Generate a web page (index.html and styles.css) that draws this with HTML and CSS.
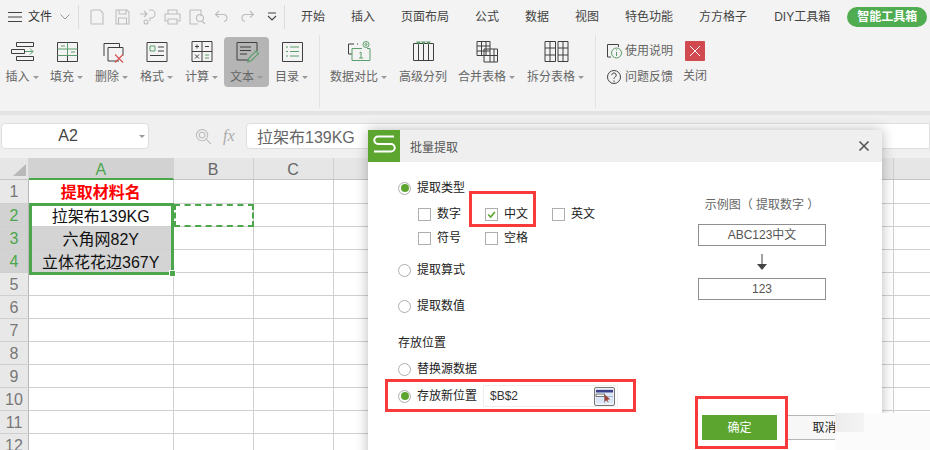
FILE: index.html
```html
<!DOCTYPE html>
<html lang="zh-CN">
<head>
<meta charset="utf-8">
<title>批量提取</title>
<link rel="stylesheet" href="styles.css">
</head>
<body>
<div class="app">
  <header class="topbar">
    <div class="menu-btn">
      <svg class="hamb" viewBox="0 0 14 10"><path d="M0 .5h14M0 5h14M0 9.500h14"/></svg>
      <span class="file-label">文件</span>
      <svg class="chev" viewBox="0 0 10 6"><path d="M.5.500 5 5l4.500-4.500"/></svg>
    </div>
    <i class="vsep"></i>
    <div class="qat">
      <svg viewBox="0 0 18 18"><path d="M4 2h8l3 3v11H4a1 1 0 0 1-1-1V3a1 1 0 0 1 1-1z"/></svg>
      <svg viewBox="0 0 18 18"><path d="M3 2h11l2 2v12H3zM6 2v4h7V2M5.500 16v-6h8v6"/></svg>
      <svg viewBox="0 0 18 18"><path d="M2 6h7M6 3l3 3-3 3M11 2h2a3 3 0 0 1 0 8h-1v3M6 14a2 2 0 1 0 4 0 2 2 0 1 0-4 0"/></svg>
      <svg viewBox="0 0 18 18"><path d="M5 6V2h9v4M2 6h15v7h-3M5 13H2V6M5 11h9v5H5z"/></svg>
      <svg viewBox="0 0 18 18"><path d="M2 2h11v6M2 2v14h8M4 5h0M8.500 10a3.500 3.500 0 1 0 7 0 3.500 3.500 0 1 0-7 0M14 13l3 3"/></svg>
      <svg viewBox="0 0 18 18"><path d="M6 3 2.500 6.500 6 9.500M3 6.500h7a3.500 3.500 0 0 1 1 7"/></svg>
      <svg viewBox="0 0 18 18"><path d="m12 3 3.500 3.500L12 9.500M15 6.500H8a3.500 3.500 0 0 0-1 7"/></svg>
      <svg class="more" viewBox="0 0 18 18"><path d="M5 5h8M5 8l4 4 4-4"/></svg>
    </div>
    <i class="vsep sep2"></i>
    <nav class="tabs">
      <span>开始</span><span>插入</span><span>页面布局</span><span>公式</span><span>数据</span><span>视图</span><span>特色功能</span><span>方方格子</span><span>DIY工具箱</span>
    </nav>
    <span class="pill">智能工具箱</span>
  </header>

  <section class="ribbon">
    <div class="group g1">
      <div class="tool first">
        <svg viewBox="0 0 26 22"><path d="M7.500 1.500h17v4h-17zM2.500 8.500h13v4h-13zM7.500 15.500h17v4h-17z"/><path class="gr" d="M16 10.500h8M21 7.500l3 3-3 3"/></svg>
        <span class="lbl">插入<b class="caret"></b></span>
      </div>
      <div class="tool">
        <svg viewBox="0 0 26 22"><path d="M3.500 1.500h20v19h-20zM3.500 14.500h20M13.500 8v12.500"/><path class="gr" d="M3.500 8h20M13.500 1.500V8M3.500 14.500h20M13.500 8v6.500M7 5h4M17 11h4"/></svg>
        <span class="lbl">填充<b class="caret"></b></span>
      </div>
      <div class="tool">
        <svg viewBox="0 0 26 22"><path d="M5 15V2.500h15.500V6M9 6.500h15v8M20 20H9V6.500"/><path class="rd" d="M16 13.500l8 8M24 13.500l-8 8"/></svg>
        <span class="lbl">删除<b class="caret"></b></span>
      </div>
      <div class="tool">
        <svg viewBox="0 0 26 22"><path d="M3 1.500h20v19H3zM14 6h6M14 10h6M6 14.500h14"/><path class="gr" d="M6 5h5v5H6z"/></svg>
        <span class="lbl">格式<b class="caret"></b></span>
      </div>
      <div class="tool">
        <svg viewBox="0 0 26 22"><path d="M3 .5h20v20H3zM13 .5v20M3 10.500h20M6 5.500h4M8 3.500v4M16 5.500h4M6 13.500l4 4M10 13.500l-4 4"/><path class="gr" d="M16 14h4M16 17h4"/></svg>
        <span class="lbl">计算<b class="caret"></b></span>
      </div>
      <div class="tool active">
        <svg viewBox="0 0 26 22"><path d="M14 19H3V1.500h20V10M6 6h11M6 9.500h11M6 13h7"/><path class="gr thick" d="M14 21l1-4 7-7 2.500 2.500-7 7z"/></svg>
        <span class="lbl">文本<b class="caret"></b></span>
      </div>
      <div class="tool">
        <svg viewBox="0 0 26 22"><path d="M3.500 1.500h20a.5.5 0 0 1 0 0v19h-20z"/><path class="gr" d="M7 6h2M11 6h9M7 10.500h2M11 10.500h9M7 15h2M11 15h9"/></svg>
        <span class="lbl">目录<b class="caret"></b></span>
      </div>
    </div>
    <i class="rsep"></i>
    <div class="group g2">
      <div class="tool auto">
        <svg viewBox="0 0 26 22"><path d="M6 13H2.500V3H8M11 3h1"/><path class="gr" d="M6 7.500v12h18v-12h-3M6 7.500h10M13 17h4M15 17v-6l-1.500 1"/><circle class="gr" cx="20" cy="3.500" r="3"/><circle class="gr" cx="20" cy="3.500" r="1"/></svg>
        <span class="lbl">数据对比<b class="caret"></b></span>
      </div>
      <div class="tool auto plain">
        <svg viewBox="0 0 26 22"><path d="M3.500 2.500h20v17h-20zM8.500 2.500v17M13.500 2.500v17M18.500 2.500v17"/><path class="gf" d="M6 .5h5l-2.500 3zM11 .5h5l-2.500 3zM16 .5h5l-2.500 3z"/></svg>
        <span class="lbl">高级分列</span>
      </div>
      <div class="tool auto">
        <svg viewBox="0 0 26 22"><path d="M3 .5h13v14H3zM3 5h13M3 10h13M7.500.5v14M12 .5v14M10 8h13.500v13H10zM10 14.500h13.500M16 14.500V21M20 8v13"/></svg>
        <span class="lbl">合并表格<b class="caret"></b></span>
      </div>
      <div class="tool auto">
        <svg viewBox="0 0 26 22"><path d="M2 .5h10.500v20H2zM15 .5h10v20H15zM2 7h10.500M2 14h10.500M7 .5v20M15 7h10M15 14h10M20 .5v20"/></svg>
        <span class="lbl">拆分表格<b class="caret"></b></span>
      </div>
    </div>
    <i class="rsep"></i>
    <div class="group g3">
      <div class="help">
        <div class="help-row">
          <svg viewBox="0 0 16 16"><path d="M5 14H1.500V1.500h11V4"/><circle class="gr" cx="10.500" cy="10" r="5"/><path class="gr" d="M10.500 9v4M10.500 6.500v1"/></svg>
          <span>使用说明</span>
        </div>
        <div class="help-row">
          <svg viewBox="0 0 16 16"><circle cx="8" cy="8" r="6.500"/><path d="M5.800 6.200a2.200 2.200 0 1 1 3.400 1.800C8.300 8.600 8 9 8 10M8 11.500v1.500"/></svg>
          <span>问题反馈</span>
        </div>
      </div>
      <div class="close-tool">
        <span class="redbox"><svg viewBox="0 0 20 20"><path d="m5 5 10 10M15 5 5 15"/></svg></span>
        <span class="lbl">关闭</span>
      </div>
    </div>
  </section>
  <div class="strip"></div>

  <section class="formula">
    <div class="namebox"><span>A2</span><b class="caret"></b></div>
    <svg class="searchfx" viewBox="0 0 18 18"><circle cx="7.500" cy="7.500" r="6"/><circle cx="7.500" cy="7.500" r="3"/><path d="m12 12 5 5"/></svg>
    <span class="fx">fx</span>
    <div class="finput">拉架布139KG</div>
  </section>

  <section class="sheet">
    <div class="hrow">
      <div class="corner"><svg viewBox="0 0 13 12"><path d="M13 0v12H0z"/></svg></div>
      <div class="ch a sel">A</div>
      <div class="ch b">B</div>
      <div class="ch c">C</div>
      <div class="ch fill"></div>
    </div>
    <div class="row tall"><div class="rh">1</div><div class="cell a title">提取材料名</div><div class="cell b"></div><div class="rest"></div></div>
    <div class="row"><div class="rh sel">2</div><div class="cell a">拉架布139KG</div><div class="cell b"></div><div class="rest"></div></div>
    <div class="row"><div class="rh sel">3</div><div class="cell a gray">六角网82Y</div><div class="cell b"></div><div class="rest"></div></div>
    <div class="row"><div class="rh sel">4</div><div class="cell a gray">立体花花边367Y</div><div class="cell b"></div><div class="rest"></div></div>
    <div class="row"><div class="rh">5</div><div class="cell a"></div><div class="cell b"></div><div class="rest"></div></div>
    <div class="row"><div class="rh">6</div><div class="cell a"></div><div class="cell b"></div><div class="rest"></div></div>
    <div class="row"><div class="rh">7</div><div class="cell a"></div><div class="cell b"></div><div class="rest"></div></div>
    <div class="row"><div class="rh">8</div><div class="cell a"></div><div class="cell b"></div><div class="rest"></div></div>
    <div class="row"><div class="rh">9</div><div class="cell a"></div><div class="cell b"></div><div class="rest"></div></div>
    <div class="row"><div class="rh">10</div><div class="cell a"></div><div class="cell b"></div><div class="rest"></div></div>
    <div class="row"><div class="rh">11</div><div class="cell a"></div><div class="cell b"></div><div class="rest"></div></div>
    <div class="row"><div class="rh">12</div><div class="cell a"></div><div class="cell b"></div><div class="rest"></div></div>
  </section>

  <div class="selection"><i class="handle"></i></div>
  <div class="marching"></div>

  <div class="dialog">
    <div class="dlg-title">
      <span class="logo"><svg viewBox="0 0 32 32"><path d="M26 6.500H10a3.500 3.500 0 0 0 0 7.500h13a3.500 3.500 0 0 1 0 7.500H6"/></svg></span>
      <span class="dlg-name">批量提取</span>
      <svg class="dlg-x" viewBox="0 0 12 12"><path d="m1.500 1.500 9 9M10.500 1.500l-9 9"/></svg>
    </div>
    <div class="dlg-body">
      <div class="left">
        <label class="radio-row r1"><i class="radio on"></i>提取类型</label>
        <div class="checks c1">
          <label><i class="box"></i>数字</label>
          <label><i class="box"><svg viewBox="0 0 13 13"><path d="m2.500 6.500 3 3 5-6"/></svg></i>中文</label>
          <label><i class="box"></i>英文</label>
        </div>
        <div class="checks c2">
          <label><i class="box"></i>符号</label>
          <label><i class="box"></i>空格</label>
        </div>
        <label class="radio-row r2"><i class="radio"></i>提取算式</label>
        <label class="radio-row r3"><i class="radio"></i>提取数值</label>
        <div class="section-label">存放位置</div>
        <label class="radio-row r4"><i class="radio"></i>替换源数据</label>
        <div class="radio-row r5">
          <i class="radio on"></i>存放新位置
          <div class="ref-input">
            <span>$B$2</span>
            <span class="ref-btn"><svg viewBox="0 0 20 16"><path class="t1" d="M1 1h18v3H1z"/><path class="t2" d="M1 4h18v11H1z"/><path class="t3" d="M1 8h18M10 4v11"/><path class="t4" d="M1 5.500h9V8H1z"/><path class="t5" d="m10 6 6 5-3 .5 1.500 3-3-2.500-1.500 2z"/></svg></span>
          </div>
        </div>
      </div>
      <div class="right">
        <div class="caption">示例图（ 提取数字 ）</div>
        <div class="sample">ABC123中文</div>
        <svg class="down" viewBox="0 0 12 16"><path class="ln" d="M6 0v13"/><path class="hd" d="M1 10h10l-5 6z"/></svg>
        <div class="sample">123</div>
      </div>
    </div>
    <div class="actions">
      <button class="btn ok">确定</button>
      <button class="btn cancel">取消</button>
    </div>
  </div>

  <div class="mark m1"></div>
  <div class="mark m2"></div>
  <div class="mark m3"></div>
  <div class="watermark"></div>
</div>
</body>
</html>
```
FILE: styles.css
```css
* { box-sizing: border-box; }
html, body { margin: 0; padding: 0; }
body {
  width: 930px;
  height: 450px;
  overflow: hidden;
  background: #fff;
  font-family: "Liberation Sans", "Noto Sans CJK SC", sans-serif;
  font-size: 12px;
  color: #444;
}
.app { position: relative; width: 930px; height: 450px; overflow: hidden; display: flex; flex-direction: column; }

/* top bar */
.topbar { flex: none; height: 33px; background: #f3f3f3; display: flex; align-items: center; }
.menu-btn { display: flex; align-items: center; padding-left: 8px; width: 78px; flex: none; }
.hamb { width: 14px; height: 10px; fill: none; stroke: #444; stroke-width: 1; }
.file-label { margin-left: 6px; color: #333; line-height: 16px; }
.chev { width: 10px; height: 6px; margin-left: 8px; fill: none; stroke: #999; stroke-width: 1; }
.vsep { flex: none; width: 1px; height: 24px; background: #dcdcdc; }
.qat { flex: none; width: 205px; display: flex; padding-left: 9px; gap: 7px; align-items: center; }
.qat svg { flex: none; width: 18px; height: 18px; fill: none; stroke: #bdbdbd; stroke-width: 1.100; }
.qat .more { stroke: #444; }
.tabs { flex: none; display: flex; gap: 26px; padding-left: 16px; color: #444; line-height: 16px; }
.tabs span:last-child { margin-left: 1px; }
.pill { flex: none; margin-left: 17px; width: 80px; height: 20px; border-radius: 10px; background: #4fac50; color: #fff; font-weight: bold; line-height: 20px; text-align: center; }

/* ribbon */
.ribbon { flex: none; height: 78px; background: #f3f3f3; display: flex; align-items: flex-start; padding-top: 2px; }
.group { display: flex; flex: none; padding-top: 2px; }
.g1 { width: 319px; }
.g2 { width: 275px; padding-left: 10px; }
.g3 { flex: 1; padding-left: 10px; }
.rsep { flex: none; width: 1px; height: 73px; background: #e2e2e2; }
.tool { flex: none; width: 45px; height: 50px; border-radius: 4px; padding-top: 4px; display: flex; flex-direction: column; align-items: center; }
.tool.first { width: 44px; }
.tool.active { background: #b5b5b5; }
.tool svg { flex: none; width: 26px; height: 22px; fill: none; stroke: #3f3f3f; stroke-width: 1; }
.tool svg .gr, .help svg .gr { stroke: #5c9e6c; }
.tool svg .thick { stroke-width: 1.200; }
.tool svg .rd { stroke: #d9535a; stroke-width: 1.200; }
.tool svg .gf { fill: #5c9e6c; stroke: none; }
.tool.auto { width: auto; }
.g2 .tool { margin-right: 12px; }
.g2 .tool.plain { margin-right: 11px; }
.lbl { display: flex; align-items: center; margin-top: 6px; height: 16px; line-height: 16px; color: #666; white-space: nowrap; }
.caret { display: block; margin-left: 3px; width: 0; height: 0; border: 3px solid transparent; border-top: 3px solid #999; border-bottom: 0; }
.help { width: 77px; padding-top: 6px; }
.help-row { display: flex; align-items: center; height: 16px; margin-bottom: 10px; color: #666; line-height: 16px; }
.help-row svg { flex: none; width: 16px; height: 16px; margin-right: 3px; fill: none; stroke: #444; stroke-width: 1; }
.close-tool { display: flex; flex-direction: column; align-items: center; padding-top: 4px; width: 24px; }
.redbox { display: block; width: 20px; height: 20px; background: #d04a4f; border-radius: 1px; }
.redbox svg { display: block; width: 20px; height: 20px; fill: none; stroke: #fff; stroke-width: 1; }
.close-tool .lbl { margin-top: 7px; }
.strip { flex: none; height: 4px; background: #e3e3e3; }

/* formula bar */
.formula { flex: none; height: 43px; background: #f0f0f0; display: flex; align-items: flex-start; padding: 8px 0 0 1px; }
.namebox { flex: none; width: 148px; height: 26px; background: #fff; border: 1px solid #dedede; border-radius: 4px; display: flex; align-items: center; font-size: 16px; color: #444; padding-right: 3px; }
.namebox span { flex: 1; text-align: center; padding-right: 2px; }
.searchfx { flex: none; width: 17px; height: 17px; margin: 5px 0 0 46px; fill: none; stroke: #bbb; stroke-width: 1.100; }
.fx { flex: none; width: 14px; margin: 3px 0 0 11px; font: italic 16px/20px "Liberation Serif", serif; color: #aaa; }
.finput { flex: 1; margin-left: 9px; height: 26px; background: #fff; border: 1px solid #dedede; border-radius: 4px 0 0 4px; padding-left: 10px; font-size: 16px; line-height: 28px; color: #666; }

/* sheet */
.sheet { flex: 1; display: flex; flex-direction: column; background: #fff; }
.hrow { flex: none; height: 22px; display: flex; background: #e6e6e6; border-bottom: 1px solid #c4c4c4; }
.corner { flex: none; width: 29px; padding: 6px 0 0 13px; border-right: 1px solid #d4d4d4; }
.corner svg { display: block; width: 13px; height: 12px; fill: #b9b9b9; }
.ch { flex: none; text-align: center; font-size: 16px; line-height: 24px; color: #666; border-right: 1px solid #d0d0d0; }
.ch.a { width: 144.500px; }
.ch.b { width: 80px; }
.ch.c { width: 80px; }
.ch.fill { flex: 1; border: 0; background: repeating-linear-gradient(90deg, transparent 0, transparent 79px, #d0d0d0 79px, #d0d0d0 80px); }
.ch.sel { background: #d2d2d2; color: #4ca64c; border-bottom: 2px solid #4ca64c; height: 22px; border-right-color: #d2d2d2; }
.row { flex: none; height: 23px; display: flex; }
.row.tall { height: 24px; }
.rh { flex: none; width: 29px; background: #e8e8e8; border-right: 1px solid #b8b8b8; border-bottom: 1px solid #cfcfcf; text-align: center; font-size: 16px; line-height: 24px; color: #777; overflow: hidden; }
.rh.sel { background: #d2d2d2; color: #4ca64c; }
.cell { flex: none; border-right: 1px solid #d0d0d0; border-bottom: 1px solid #d0d0d0; text-align: center; font-size: 16px; line-height: 26px; color: #111; white-space: nowrap; overflow: hidden; }
.cell.a { width: 144.500px; }
.cell.b { width: 80px; }
.cell.gray { background: #d4d4d4; }
.cell.title { color: #f00; font-weight: bold; }
.rest { flex: 1; border-bottom: 1px solid #d0d0d0; background: repeating-linear-gradient(90deg, transparent 0, transparent 79px, #d0d0d0 79px, #d0d0d0 80px); }

.selection { position: absolute; left: 29px; top: 203px; width: 145px; height: 72px; border: 3px solid #4ca64c; }
.handle { position: absolute; right: -5px; bottom: -5px; width: 6px; height: 6px; background: #4ca64c; border: 1px solid #fff; box-sizing: content-box; width: 5px; height: 5px; }
.marching { position: absolute; left: 174px; top: 204px; width: 80px; height: 23px; border: 2px dashed #4ca64c; }

/* dialog */
.dialog { position: absolute; left: 368px; top: 130px; width: 514px; height: 330px; background: #fff; box-shadow: 0 0 12px rgba(0,0,0,.28); }
.dlg-title { height: 32px; background: #efefef; display: flex; align-items: center; }
.logo { flex: none; width: 32px; height: 32px; background: #5ca52f; }
.logo svg { display: block; width: 32px; height: 32px; fill: none; stroke: #fff; stroke-width: 2; }
.dlg-name { margin-left: 10px; padding-top: 4px; color: #555; flex: 1; line-height: 16px; }
.dlg-x { flex: none; width: 12px; height: 12px; margin-right: 12px; fill: none; stroke: #555; stroke-width: 1.600; }
.dlg-body { display: flex; height: 244px; }
.left { flex: none; width: 330px; padding: 16px 0 0 30px; }
.radio-row { display: flex; align-items: center; height: 20px; color: #222; line-height: 16px; white-space: nowrap; }
.radio { flex: none; width: 13px; height: 13px; margin-right: 6px; border: 1px solid #aeaeae; border-radius: 50%; background: #fff; display: flex; align-items: center; justify-content: center; }
.radio.on::after { content: ""; width: 8px; height: 8px; border-radius: 50%; background: #5ca52f; }
.checks { display: flex; height: 20px; padding-left: 20px; }
.c1 { margin-top: 6px; }
.c2 { margin-top: 4px; }
.checks label { flex: none; width: 67px; display: flex; align-items: center; color: #222; line-height: 16px; }
.box { flex: none; width: 13px; height: 13px; margin-right: 6px; border: 1px solid #aeaeae; background: #fff; display: block; }
.box svg { display: block; width: 11px; height: 11px; fill: none; stroke: #5ca52f; stroke-width: 2; }
.r2 { margin-top: 12px; }
.r3 { margin-top: 16px; }
.section-label { margin-top: 17px; height: 20px; line-height: 20px; color: #222; }
.r4 { margin-top: 6px; }
.r5 { margin-top: 7px; }
.ref-input { flex: none; width: 135px; height: 22px; margin-left: 6px; border: 1px solid #efefef; display: flex; align-items: center; justify-content: space-between; padding: 0 2px 0 6px; color: #333; }
.ref-btn { display: block; width: 21px; height: 19px; border: 1px solid #777; border-radius: 2px; background: #eef2f8; }
.ref-btn svg { display: block; width: 19px; height: 17px; }
.t1 { fill: #3b3f8c; }
.t2 { fill: #dbe7f6; }
.t3 { fill: none; stroke: #9fb4d2; stroke-width: 1; }
.t4 { fill: #fff; stroke: #555; stroke-width: .8; }
.t5 { fill: #a04030; }
.right { flex: none; width: 128px; padding-top: 33px; display: flex; flex-direction: column; align-items: center; }
.caption { height: 20px; line-height: 20px; color: #666; white-space: nowrap; }
.sample { width: 128px; height: 22px; margin-top: 9px; border: 1px solid #8f8f8f; text-align: center; line-height: 21px; color: #555; }
.down { flex: none; width: 12px; height: 16px; margin: 8px 0 0; }
.down + .sample { margin-top: 8px; }
.ln { stroke: #444; stroke-width: 1; fill: none; }
.hd { fill: #444; }
.actions { display: flex; gap: 10px; padding: 9px 0 0 334px; }
.btn { flex: none; width: 75px; height: 25px; padding: 0; font: 12px/16px "Liberation Sans", "Noto Sans CJK SC", sans-serif; }
.ok { background: #5ca52f; border: 0; color: #fff; }
.cancel { background: #f7f7f7; border: 0; border-top: 1px solid #b5b5b5; border-bottom: 1px solid #b5b5b5; color: #222; }

/* annotations */
.mark { position: absolute; border: 3.500px solid #f93a3a; }
.m1 { left: 469px; top: 191px; width: 67px; height: 36px; }
.m2 { left: 385px; top: 379px; width: 251px; height: 33px; }
.m3 { left: 695px; top: 396px; width: 93px; height: 53px; }
.watermark { position: absolute; left: 835px; top: 413px; width: 95px; height: 37px; background: linear-gradient(90deg, #ececec, #f4f4f4) no-repeat 0 0 / 29px 19px, #fbfbfb; }
```
